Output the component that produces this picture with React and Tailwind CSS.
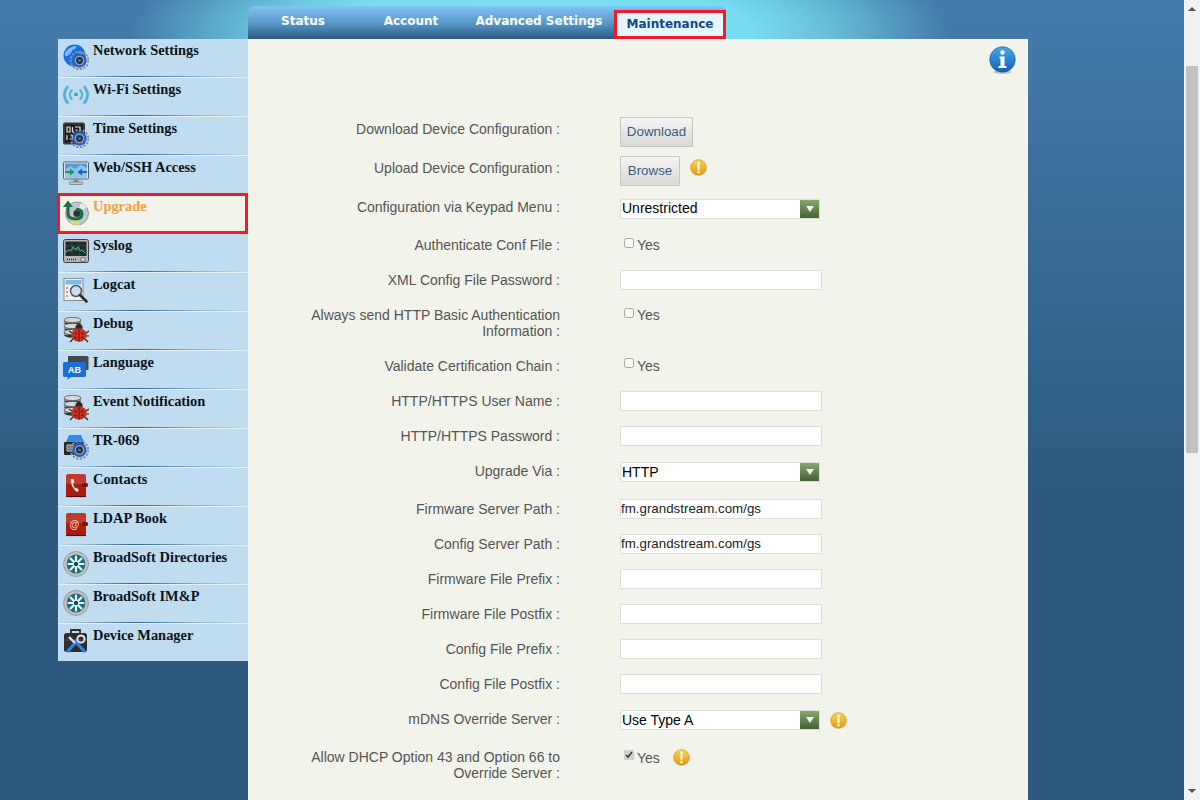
const Gear = ({ x = 17, y = 17, s = 1 }) => (
  <g transform={`translate(${x} ${y}) scale(${s})`}>
    <circle r="7.6" fill="none" stroke="#8a8f96" strokeWidth="1.8" strokeDasharray="2 1.2" />
    <circle r="6.2" fill="#1f5fd0" />
    <circle r="4.2" fill="#9aa3ad" />
    <circle r="3" fill="#22303f" />
    <circle r="1.1" fill="#5f7d9b" />
  </g>
);

const Bug = () => (
  <g transform="translate(2 -2)">
    <path d="M7 18l-3-2M7 21H3M8 24l-3 3M21 18l3-2M21 21h4M20 24l3 3" stroke="#222" strokeWidth="1.1" />
    <circle cx="14" cy="12.5" r="3.6" fill="#2a2a2a" />
    <ellipse cx="14" cy="20" rx="7.8" ry="6.8" fill="#c92f22" />
    <path d="M14 14v12.5" stroke="#5e1510" strokeWidth="1" />
    <circle cx="10.5" cy="18.5" r="1.1" fill="#5e1510" />
    <circle cx="17.5" cy="18.5" r="1.1" fill="#5e1510" />
    <circle cx="10.5" cy="22.5" r="1.1" fill="#5e1510" />
    <circle cx="17.5" cy="22.5" r="1.1" fill="#5e1510" />
  </g>
);

const Db = () => (
  <g>
    {[1, 7, 13].map((y) => (
      <g key={y}>
        <ellipse cx="9.5" cy={y + 5} rx="8.5" ry="2.8" fill="#3d4043" />
        <rect x="1" y={y + 2} width="17" height="3" fill="#8b8f92" />
        <ellipse cx="9.5" cy={y + 2} rx="8.5" ry="2.6" fill="#d7d9da" stroke="#45484a" strokeWidth="0.7" />
      </g>
    ))}
  </g>
);

const RedBook = ({ children }) => (
  <g>
    <rect x="3" y="1" width="20" height="23" rx="2.5" fill="#a81f12" />
    <rect x="3" y="1" width="20" height="10" rx="2.5" fill="#c8473a" opacity="0.7" />
    <rect x="19" y="10" width="6" height="4" rx="1.5" fill="#7d140b" />
    <path d="M3 23.5h20" stroke="#5c0d07" strokeWidth="1.2" />
    {children}
  </g>
);

const BroadSoft = () => (
  <g>
    <circle cx="13" cy="13" r="12.5" fill="#bcc0c1" />
    <circle cx="13" cy="13" r="12.5" fill="none" stroke="#8e9295" strokeWidth="0.8" />
    <circle cx="13" cy="13" r="9.4" fill="#1b6b7a" />
    <path d="M13 5.5v15M5.5 13h15M7.5 7.5l11 11M18.5 7.5l-11 11" stroke="#e4fafb" strokeWidth="2.2" strokeLinecap="round" />
    <circle cx="13" cy="13" r="2.2" fill="#0c4a56" />
  </g>
);

const icons = {
  network: (
    <g>
      <circle cx="11.5" cy="11.5" r="11" fill="#1a6ce0" />
      <path d="M4 6c3-2 5-4 9-4 1 2-1 3-3 4s-1 3-3 4-3 3-5 2c-1-2 0-4 2-6zM15 8c2-1 5 0 6 3-2 1-5 1-6-3z" fill="#7cb8f2" />
      <Gear x={16.5} y={16.5} s={1.15} />
    </g>
  ),
  wifi: (
    <g fill="none" stroke="#58b2d4" strokeLinecap="round">
      <path d="M8.5 7.5a6.5 6.5 0 000 8.5M17.5 7.5a6.5 6.5 0 010 8.5" strokeWidth="2.4" />
      <path d="M4.5 4a11.5 11.5 0 000 15.5M21.5 4a11.5 11.5 0 010 15.5" strokeWidth="2.8" />
      <circle cx="13" cy="11.5" r="2" fill="#4a9fc4" stroke="none" />
      <path d="M13 14v10" stroke="#d5dbde" strokeWidth="2.4" />
    </g>
  ),
  time: (
    <g>
      <rect x="0" y="0.5" width="22" height="22" rx="2" fill="#3a3a3a" />
      <rect x="2" y="2.5" width="18" height="18" fill="#1c1c1c" />
      <path d="M4 5h3v5H4zM4 13v5M9.5 5v5M9.5 13v5M12 5h5v5M12 13v5h4" stroke="#e2e2e2" strokeWidth="1.2" fill="none" />
      <Gear x={16.5} y={16.5} s={1.15} />
    </g>
  ),
  web: (
    <g>
      <rect x="0.5" y="1" width="25" height="17" rx="1" fill="#e8e8e8" stroke="#5c5f62" />
      <rect x="2" y="2.5" width="22" height="14" fill="#4e9ee0" />
      <path d="M2 9l5-4 5 3 6-4 6 3v9H2z" fill="#8fc4ec" />
      <path d="M2 10h5V7.5l4.5 3.5L7 14.5V12H2z" fill="#1f9a5d" />
      <path d="M24 10h-5V7.5L14.5 11l4.5 3.5V12h5z" fill="#1f5fc0" />
      <rect x="10.5" y="18" width="5" height="3" fill="#8d9094" />
      <rect x="6.5" y="21" width="13" height="2.5" rx="0.5" fill="#c8cacc" stroke="#5c5f62" strokeWidth="0.6" />
    </g>
  ),
  upgrade: (
    <g>
      <circle cx="14" cy="13.5" r="11.5" fill="#bfc5cc" stroke="#6e7277" strokeWidth="0.6" />
      <path d="M14 13.5L7 23a11.5 11.5 0 0010 1.5z" fill="#d8cf8a" />
      <path d="M14 13.5L24 7a11.5 11.5 0 00-6-4z" fill="#e8ecef" />
      <circle cx="14" cy="13.5" r="3.5" fill="#2c2f33" stroke="#555" strokeWidth="0.7" />
      <path d="M5 6v7.5c0 4 3 5.5 8 5.5 4 0 6-2 6-5.5s-3-4.5-6-3.5" fill="none" stroke="#16723c" strokeWidth="3" />
      <path d="M0 7L5 0.5 10 7z" fill="#16723c" />
    </g>
  ),
  syslog: (
    <g>
      <rect x="0.5" y="0.5" width="25" height="23" rx="2" fill="#b4b6b8" stroke="#3c3e40" />
      <rect x="2.5" y="2.5" width="21" height="14.5" fill="#232b2b" />
      <path d="M3 13l3-2 2 1 2-4 3 3 2-3 2 4 2-1 3 3" fill="none" stroke="#45d69a" strokeWidth="1" />
      <path d="M3 7h20M3 11h20M9 3v14M16 3v14" stroke="#55605f" strokeWidth="0.4" />
      <path d="M4 20.5h10" stroke="#333" strokeWidth="1.6" strokeDasharray="1 1" />
      <rect x="18" y="19" width="4" height="3" fill="#eee" stroke="#333" strokeWidth="0.6" />
    </g>
  ),
  logcat: (
    <g>
      <rect x="1" y="0.5" width="19" height="22" fill="#eef0f1" stroke="#8c8f92" />
      <rect x="2.5" y="2" width="16" height="4.5" fill="#7fbbe8" />
      <path d="M3 10h2M3 14h2M3 18h2" stroke="#c2392b" strokeWidth="1.2" />
      <circle cx="13" cy="13" r="5.5" fill="#c9dff0" stroke="#55585b" strokeWidth="1.5" />
      <path d="M17 17l6.500 6.500" stroke="#26282a" strokeWidth="2.6" strokeLinecap="round" />
    </g>
  ),
  debug: (
    <g>
      <Db />
      <Bug />
    </g>
  ),
  language: (
    <g>
      <path d="M5 0h19a1.500 1.500 0 011.500 1.500V14H5z" fill="#45484b" />
      <path d="M1.500 6h20a1.500 1.500 0 011.500 1.500v12a1.500 1.500 0 01-1.500 1.500H8l-4 3 1-3H1.500A1.500 1.500 0 010 19.500v-12A1.500 1.500 0 011.500 6z" fill="#1a6fd6" />
    </g>
  ),
  tr069: (
    <g>
      <path d="M3 8l3-7h12l3 7z" fill="#2f8be6" />
      <rect x="1" y="8" width="20" height="13" rx="1" fill="#26292c" />
      <path d="M4 11h6v6H4z" fill="none" stroke="#d6d8da" strokeWidth="1" />
      <path d="M6 11v6M8 11v6M4 14h6" stroke="#d6d8da" strokeWidth="0.7" />
      <Gear x={16.5} y={16} s={1.15} />
    </g>
  ),
  contacts: (
    <RedBook>
      <path d="M8 6c-1 4 2 10 6 13l2-1.500-2.500-3-1.200 1c-1.300-1.500-2-3.500-2.300-5.500l1.500-.5-1-3.500z" fill="#f4e6e2" />
    </RedBook>
  ),
  ldap: <RedBook />,
  broadsoft: <BroadSoft />,
  device: (
    <g>
      <path d="M8 4V1h9v3" fill="none" stroke="#2c2e30" strokeWidth="1.8" />
      <rect x="1" y="4" width="23" height="19" rx="2.5" fill="#2c2e30" />
      <path d="M1 11h23" stroke="#55585b" strokeWidth="0.8" />
      <path d="M5 22l9-10" stroke="#2f7ee6" strokeWidth="3.2" strokeLinecap="round" />
      <path d="M21 22l-9-10" stroke="#2f7ee6" strokeWidth="3.2" strokeLinecap="round" />
      <path d="M6 8l6 6" stroke="#e4e6e8" strokeWidth="2.4" />
      <circle cx="18" cy="10" r="3.6" fill="none" stroke="#e4e6e8" strokeWidth="2" />
    </g>
  ),
};

const menu = [
  { name: 'Network Settings', icon: 'network' },
  { name: 'Wi-Fi Settings', icon: 'wifi' },
  { name: 'Time Settings', icon: 'time' },
  { name: 'Web/SSH Access', icon: 'web' },
  { name: 'Upgrade', icon: 'upgrade', active: true },
  { name: 'Syslog', icon: 'syslog' },
  { name: 'Logcat', icon: 'logcat' },
  { name: 'Debug', icon: 'debug' },
  { name: 'Language', icon: 'language' },
  { name: 'Event Notification', icon: 'debug' },
  { name: 'TR-069', icon: 'tr069' },
  { name: 'Contacts', icon: 'contacts' },
  { name: 'LDAP Book', icon: 'ldap' },
  { name: 'BroadSoft Directories', icon: 'broadsoft' },
  { name: 'BroadSoft IM&P', icon: 'broadsoft' },
  { name: 'Device Manager', icon: 'device' },
];

const MenuIcon = ({ name }) => (
  <svg viewBox="0 0 26 26" className="w-[26px] h-[26px] mt-[1px] shrink-0">
    {icons[name]}
    {name === 'language' && (
      <text x="11.5" y="17" textAnchor="middle" fontSize="9" fontWeight="700" fontFamily="Liberation Sans" fill="#fff">AB</text>
    )}
    {name === 'ldap' && (
      <text x="11.5" y="16" textAnchor="middle" fontSize="10" fontFamily="Liberation Sans" fill="#f0c8c0">@</text>
    )}
  </svg>
);

const Warn = () => (
  <svg viewBox="0 0 18 18" className="w-[17px] h-[17px] shrink-0">
    <defs>
      <linearGradient id="warnFill" x1="0" y1="0" x2="0" y2="1">
        <stop offset="0" stopColor="#fbd35a" />
        <stop offset="1" stopColor="#e8960f" />
      </linearGradient>
    </defs>
    <circle cx="9" cy="9" r="8.3" fill="url(#warnFill)" stroke="#d98f10" strokeWidth="0.7" />
    <path d="M9 3.5v7.5" stroke="#fff8dc" strokeWidth="2.4" strokeLinecap="round" />
    <circle cx="9" cy="14" r="1.3" fill="#fff8dc" />
  </svg>
);

const InfoIcon = () => (
  <svg viewBox="0 0 27 28" className="w-[27px] h-[28px]">
    <defs>
      <linearGradient id="infoFill" x1="0" y1="0" x2="0" y2="1">
        <stop offset="0" stopColor="#4ba6e8" />
        <stop offset="1" stopColor="#0b62b8" />
      </linearGradient>
    </defs>
    <ellipse cx="13.5" cy="26" rx="9" ry="1.7" fill="#9a9c98" opacity="0.6" />
    <circle cx="13.5" cy="13.5" r="12.8" fill="url(#infoFill)" stroke="#0c5aa8" strokeWidth="0.6" />
    <circle cx="13.5" cy="6.5" r="2.2" fill="#fff" />
    <path d="M10.5 10.5h5V20h2v2h-8v-2h2v-7.5h-1z" fill="#fff" />
  </svg>
);

const Select = ({ value }) => (
  <div className="w-[200px] h-[20px] mt-[3px] flex items-center bg-white border border-[#dddddd] text-[14px] text-black pl-[1px]">
    <span className="flex-1">{value}</span>
    <span className="w-[19px] h-[18px] flex items-center justify-center bg-gradient-to-b from-[#87a86e] to-[#466333]">
      <svg viewBox="0 0 8 6" className="w-[8px] h-[6px]"><path d="M0 0h8L4 6z" fill="#f2f3eb" /></svg>
    </span>
  </div>
);

const TextInput = ({ value = '' }) => (
  <input
    type="text"
    readOnly
    value={value}
    className="block w-[202px] h-[20px] bg-white border border-[#dddddd] text-[13.33px] leading-none text-[#222] outline-none"
  />
);

const Btn = ({ w, children }) => (
  <button className={`${w} h-[30px] mt-[6px] bg-gradient-to-b from-[#f4f4f4] to-[#d9d9d9] border border-[#c6c6c2] text-[13.33px] text-[#3f5a78]`}>
    {children}
  </button>
);

const Check = ({ checked, warn }) => (
  <div className="flex items-center leading-[16px]">
    <input
      type="checkbox"
      readOnly
      checked={!!checked}
      className={checked ? 'w-[10px] h-[10px] ml-[4px] mr-[3px] mb-[5px] accent-[#d0d0d0]' : 'w-[10px] h-[10px] ml-[4px] mr-[3px] mb-[5px] opacity-60'}
    />
    <span className="text-[14px] text-[#555]">Yes</span>
    {warn && <span className="ml-[13px]"><Warn /></span>}
  </div>
);

const rows = [
  { h: 'h-[39px]', label: 'Download Device Configuration :', ctl: <Btn w="w-[73px]">Download</Btn> },
  { h: 'h-[39px]', label: 'Upload Device Configuration :', ctl: (
    <div className="flex items-center gap-[10px]"><Btn w="w-[60px]">Browse</Btn><Warn /></div>
  ) },
  { h: 'h-[40px]', label: 'Configuration via Keypad Menu :', ctl: <Select value="Unrestricted" /> },
  { h: 'h-[36px]', label: 'Authenticate Conf File :', ctl: <Check /> },
  { h: 'h-[34px]', label: 'XML Config File Password :', ctl: <TextInput /> },
  { h: 'h-[51px] pt-[10px]', label: <>Always send HTTP Basic Authentication<br />Information :</>, top: true, ctl: <Check /> },
  { h: 'h-[35px]', label: 'Validate Certification Chain :', ctl: <Check /> },
  { h: 'h-[35px]', label: 'HTTP/HTTPS User Name :', ctl: <TextInput /> },
  { h: 'h-[35px]', label: 'HTTP/HTTPS Password :', ctl: <TextInput /> },
  { h: 'h-[35px]', label: 'Upgrade Via :', ctl: <Select value="HTTP" /> },
  { h: 'h-[38px] pt-[3px]', label: 'Firmware Server Path :', ctl: <TextInput value="fm.grandstream.com/gs" /> },
  { h: 'h-[35px]', label: 'Config Server Path :', ctl: <TextInput value="fm.grandstream.com/gs" /> },
  { h: 'h-[35px]', label: 'Firmware File Prefix :', ctl: <TextInput /> },
  { h: 'h-[35px]', label: 'Firmware File Postfix :', ctl: <TextInput /> },
  { h: 'h-[35px]', label: 'Config File Prefix :', ctl: <TextInput /> },
  { h: 'h-[35px]', label: 'Config File Postfix :', ctl: <TextInput /> },
  { h: 'h-[35px]', label: 'mDNS Override Server :', ctl: (
    <div className="flex items-center gap-[10px]"><Select value="Use Type A" /><span className="mt-[3px]"><Warn /></span></div>
  ) },
  { h: 'h-[50px] pt-[13px]', label: <>Allow DHCP Option 43 and Option 66 to<br />Override Server :</>, top: true, ctl: <Check checked warn /> },
];

const tabs = [
  { name: 'Status', w: 'w-[110px]' },
  { name: 'Account', w: 'w-[106px]' },
  { name: 'Advanced Settings', w: 'w-[150px]' },
];

export default function App() {
  return (
    <div className="h-screen overflow-hidden flex font-['Liberation_Sans',Arial,sans-serif] bg-[linear-gradient(#457cac,#2d5a7e_62%)]">
      <div className="w-[1184px] flex flex-col">
        {/* top tabs */}
        <div className="h-[39px] shrink-0 pl-[248px] pt-[6px] bg-[radial-gradient(ellipse_410px_110px_at_540px_34px,#7de3f4_0%,#76dcef_52%,#64bcd6_72%,rgba(69,124,172,0)_100%)]">
          <div className="w-[478px] h-[33px] flex rounded-t-[6px] bg-gradient-to-b from-[#82c4f5] via-[#5a9acb] to-[#2a5c82] font-['DejaVu_Sans',Verdana,sans-serif] font-bold text-[12px] text-white">
            {tabs.map((t) => (
              <div key={t.name} className={`${t.w} h-[29px] flex items-center justify-center`}>{t.name}</div>
            ))}
            <div className="flex-1 mt-[4px] pb-[1px] border-[3px] border-[#ec1c2c] bg-[#e6f6fd] text-[#0f4a80] flex items-center justify-center">
              Maintenance
            </div>
          </div>
        </div>

        <div className="flex-1 min-h-0 flex pl-[58px]">
          {/* side menu */}
          <div className="w-[190px] h-[622px] shrink-0 bg-[#c0dcf1] font-['Liberation_Serif',Georgia,serif] font-bold text-[14.4px] text-[#0a1420]">
            {menu.map((m, i) => (
              <div
                key={m.name}
                className={m.active ? 'relative h-[39px] flex gap-[4px] pl-[5px] pt-[4px] bg-[#f2f3eb] text-[#f4a040]' : 'relative h-[39px] flex gap-[4px] pl-[5px] pt-[4px]'}
              >
                <MenuIcon name={m.icon} />
                <span className="leading-[15px]">{m.name}</span>
                {m.active && <div className="absolute left-[-1px] right-0 top-[-2px] bottom-0 border-[3px] border-[#ec1c2c]" />}
                {!m.active && i !== 3 && i < 15 && (
                  <div className="absolute inset-x-0 bottom-0 h-[2px] bg-[linear-gradient(90deg,#c0dcf1,#34658c_40%,#8fb4d0_75%,#c0dcf1)] border-b border-[#e4f1fa]" />
                )}
              </div>
            ))}
          </div>

          {/* main panel */}
          <div className="w-[780px] bg-[#f2f3eb]">
            <div className="h-[70px] flex justify-end pt-[7px] pr-[12px]">
              <InfoIcon />
            </div>
            {rows.map((r, i) => (
              <div key={i} className={`${r.h} flex ${r.top ? 'items-start' : 'items-center'}`}>
                <div className="w-[312px] text-right text-[14px] leading-[16px] text-[#555]">{r.label}</div>
                <div className="ml-[60px]">{r.ctl}</div>
              </div>
            ))}
          </div>
        </div>
      </div>

      {/* scrollbar */}
      <div className="w-[16px] h-full bg-[#f1f1f1] flex flex-col items-center justify-between py-[7px]">
        <div className="flex flex-col items-center">
          <svg viewBox="0 0 8 4" className="w-[8px] h-[4px]"><path d="M4 0l4 4H0z" fill="#505050" /></svg>
          <div className="w-[12px] h-[387px] mt-[55px] bg-[#c1c1c1]" />
        </div>
        <svg viewBox="0 0 8 4" className="w-[8px] h-[4px]"><path d="M0 0h8L4 4z" fill="#505050" /></svg>
      </div>
    </div>
  );
}
